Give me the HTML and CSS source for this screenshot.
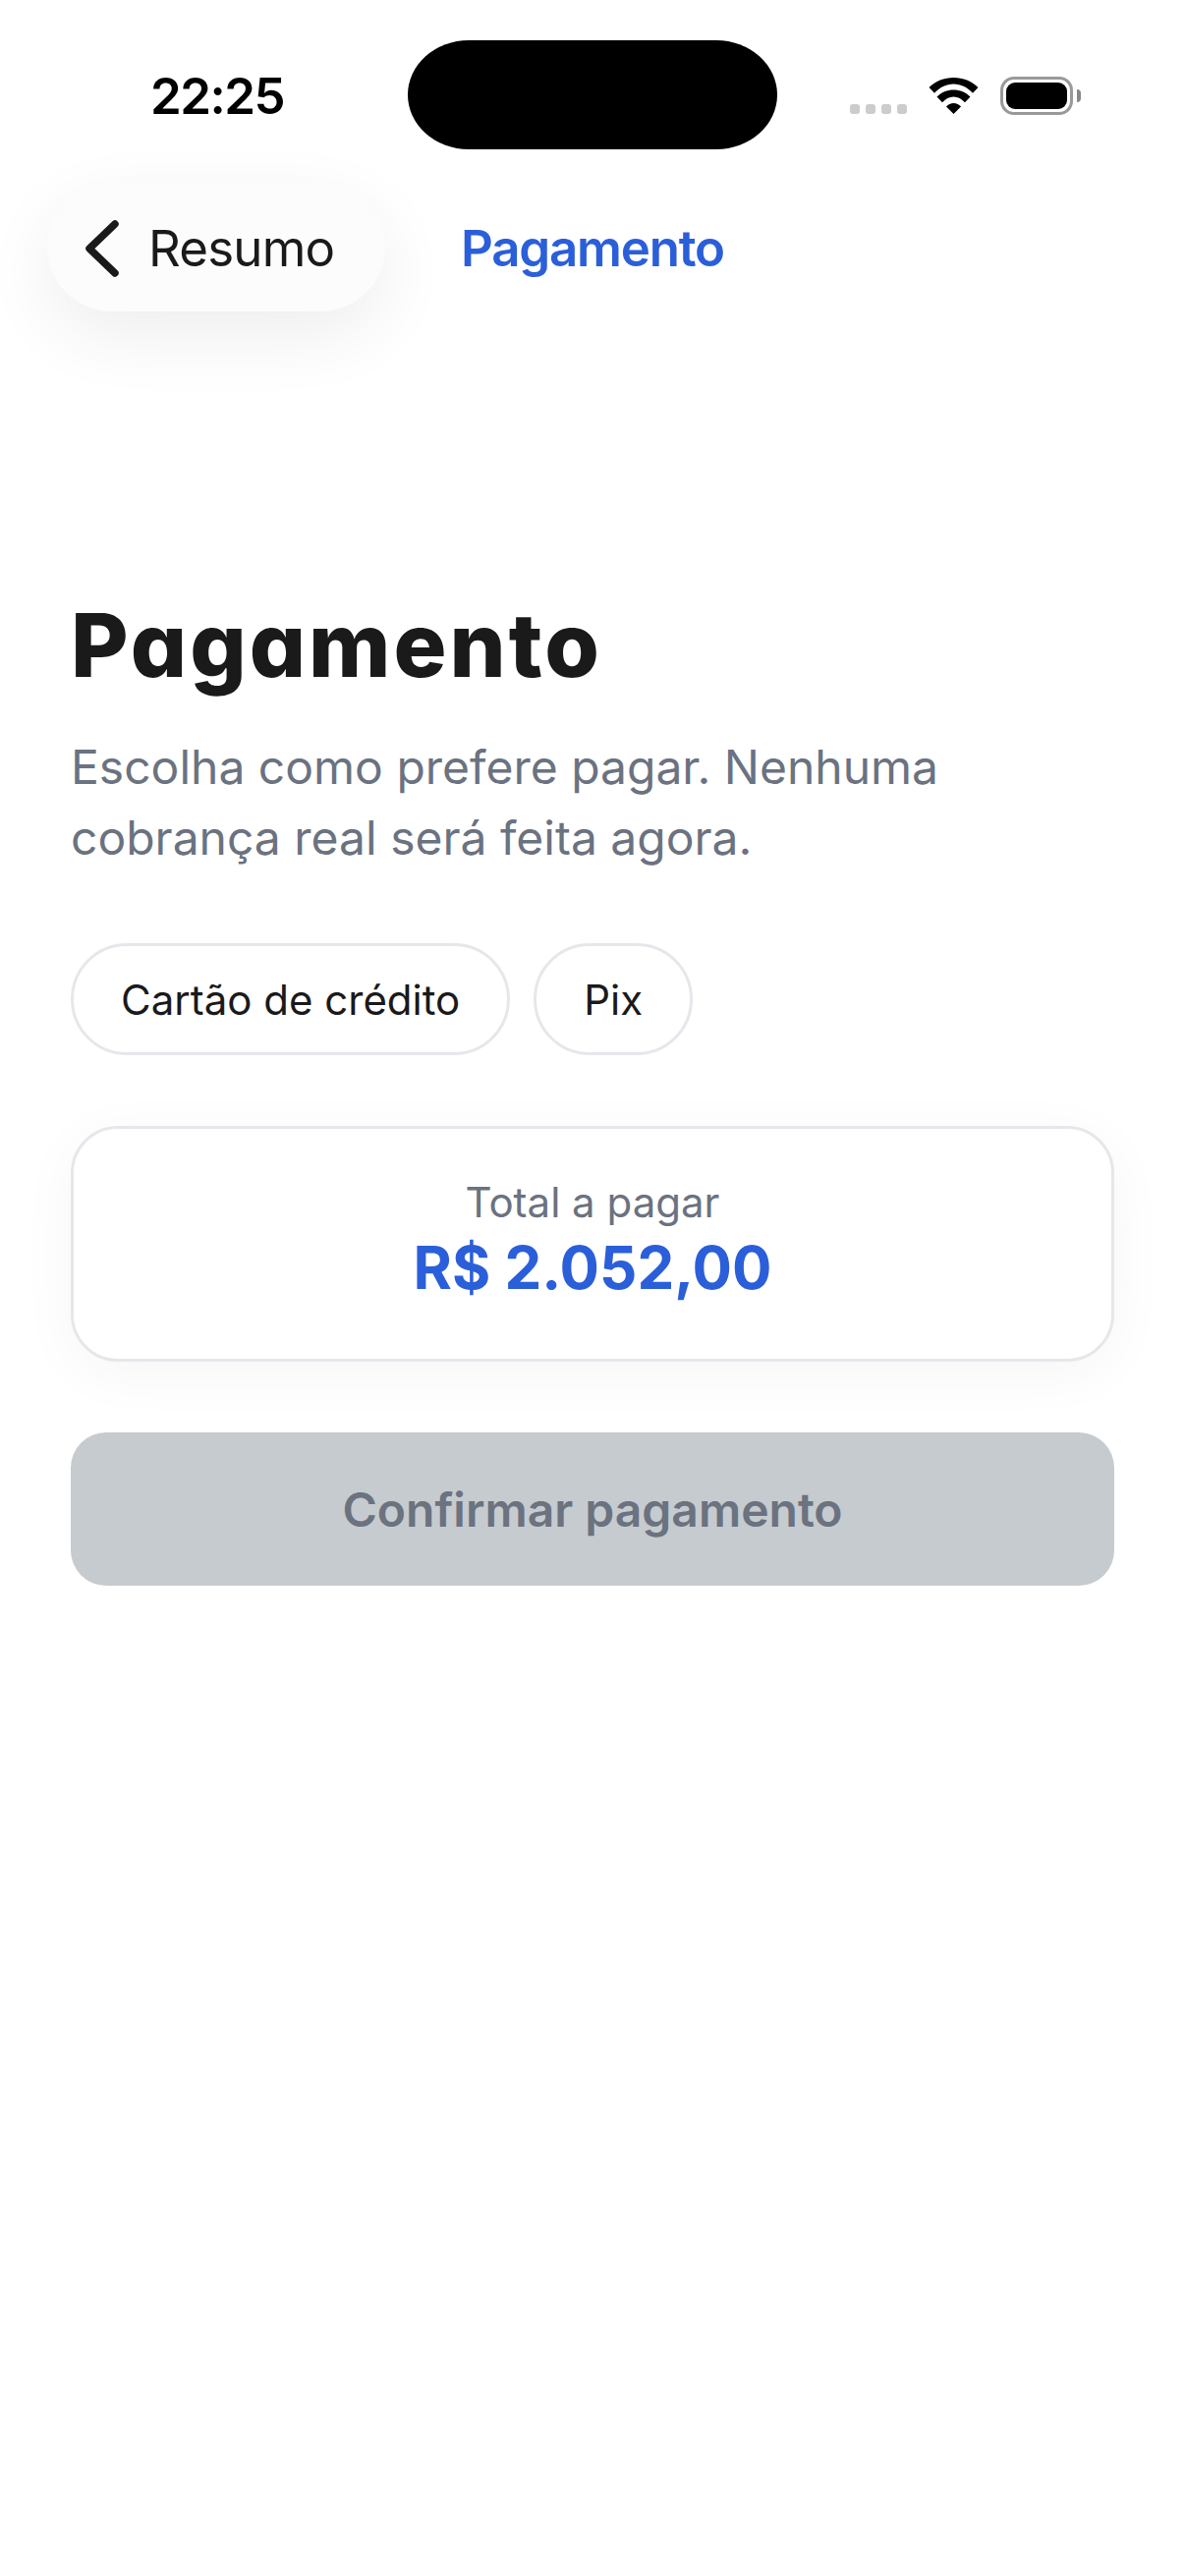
FILE: index.html
```html
<!DOCTYPE html>
<html lang="pt-BR">
<head>
<meta charset="utf-8">
<title>Pagamento</title>
<link rel="stylesheet" href="styles.css">
</head>
<body>
<div class="status">
  <span class="time">22:25</span>
  <div class="island"></div>
  <div class="dots"><i></i><i></i><i></i><i></i></div>
  <svg class="wifi" width="51" height="37" viewBox="0 0 51 37"><path d="M0.5 10 C7 3.5 16 0 25.5 0 C35 0 44 3.500 50.500 10 L45 15.800 C39.800 10 33 6.500 25.500 6.500 C18 6.500 11.200 10 6 15.800 Z"/><path d="M8.500 19.500 C13 15 19 12.500 25.500 12.500 C32 12.500 38 15 42.500 19.500 L37 25.300 C33.800 21.800 30 19.500 25.500 19.500 C21 19.500 17.200 21.800 14 25.300 Z"/><path d="M18 29.500 C20 27.500 22.500 26 25.500 26 C28.500 26 31 27.500 33 29.500 L25.500 37 Z"/></svg>
  <div class="battery"><div class="level"></div></div>
  <div class="cap"></div>
</div>
<nav class="nav">
  <a class="back">
    <svg class="chev" width="34" height="58" viewBox="0 0 34 58"><path d="M30 4 L4 29 L30 54" fill="none" stroke="#1a1a1a" stroke-width="7.500" stroke-linecap="round" stroke-linejoin="round"/></svg>
    <span class="back-label">Resumo</span>
  </a>
  <a class="current">Pagamento</a>
</nav>
<main class="main">
  <h1 class="title">Pagamento</h1>
  <p class="sub">Escolha como prefere pagar. Nenhuma cobrança real será feita agora.</p>
  <div class="chips">
    <button class="chip">Cartão de crédito</button>
    <button class="chip">Pix</button>
  </div>
  <section class="card">
    <div class="label">Total a pagar</div>
    <div class="amount">R$ 2.052,00</div>
  </section>
  <button class="confirm">Confirmar pagamento</button>
</main>
</body>
</html>
```
FILE: styles.css
```css
* { box-sizing: border-box; }
html, body { margin: 0; padding: 0; }
body {
  width: 1206px;
  height: 2622px;
  background: #fff;
  font-family: Inter, "Noto Sans", sans-serif;
  color: #1a1a1a;
  overflow: hidden;
}
.status {
  height: 186px;
  display: flex;
  align-items: flex-start;
  padding-top: 41px;
}
.time {
  margin-left: 153px;
  width: 262px;
  font-size: 51px;
  font-weight: 600;
  letter-spacing: -1.5px;
  line-height: 62px;
  margin-top: 26px;
  color: #000;
}
.island {
  width: 376px;
  height: 111px;
  background: #000;
  border-radius: 62px / 55.5px;
}
.dots {
  display: flex;
  gap: 6px;
  margin-left: 74px;
  margin-top: 65px;
}
.dots i {
  width: 10px;
  height: 10px;
  border-radius: 3px;
  background: #ccc;
}
.wifi {
  margin-left: 22px;
  margin-top: 38px;
  fill: #000;
}
.battery {
  width: 74px;
  height: 39px;
  margin-left: 22px;
  margin-top: 37px;
  border: 3px solid #999;
  border-radius: 14px;
  padding: 3px;
}
.level {
  height: 100%;
  background: #000;
  border-radius: 9px;
}
.cap {
  width: 4px;
  height: 13px;
  margin-left: 4px;
  margin-top: 50px;
  background: #888;
  border-radius: 0 5px 5px 0;
}
.nav {
  display: flex;
  align-items: center;
  gap: 77px;
  padding-left: 48px;
}
.back {
  display: flex;
  align-items: center;
  gap: 30px;
  width: 344px;
  height: 131px;
  padding-left: 39px;
  border-radius: 66px;
  background: #fcfcfc;
  box-shadow: 0 24px 72px rgba(0, 0, 0, 0.07);
  font-size: 51px;
  letter-spacing: -0.8px;
  line-height: 62px;
}
.chev { display: block; margin-top: 2px; }
.back-label { margin-top: 2px; }
.current {
  font-size: 51px;
  font-weight: 600;
  letter-spacing: -1.2px;
  line-height: 62px;
  margin-top: 2px;
  color: #2b5fd9;
}
.main {
  padding: 290px 72px 0;
}
.title {
  margin: 0;
  font-size: 90px;
  font-weight: 800;
  letter-spacing: 3px;
  line-height: 100px;
  color: #1a1a1a;
  font-feature-settings: "cv11" 1;
}
.sub {
  margin: 38px 0 0;
  width: 900px;
  font-size: 48px;
  line-height: 72px;
  color: #6b7280;
}
.chips {
  display: flex;
  gap: 24px;
  margin-top: 71px;
}
.chip {
  height: 114px;
  padding: 0 48px;
  border: 3px solid #e5e7eb;
  border-radius: 57px;
  background: #fff;
  font-family: inherit;
  font-size: 42px;
  color: #1a1a1a;
}
.card {
  height: 240px;
  margin-top: 72px;
  padding-top: 45px;
  border: 3px solid #e5e7eb;
  border-radius: 48px;
  background: #fff;
  box-shadow: 0 12px 60px rgba(0, 0, 0, 0.04);
  text-align: center;
}
.label {
  font-size: 42px;
  line-height: 60px;
  color: #6b7280;
}
.amount {
  font-size: 60px;
  font-weight: 700;
  line-height: 72px;
  color: #2b5fd9;
}
.confirm {
  display: block;
  width: 100%;
  height: 156px;
  margin-top: 72px;
  border: 0;
  border-radius: 36px;
  background: #c6cbcf;
  font-family: inherit;
  font-size: 48px;
  font-weight: 600;
  color: #6b7280;
}
```
